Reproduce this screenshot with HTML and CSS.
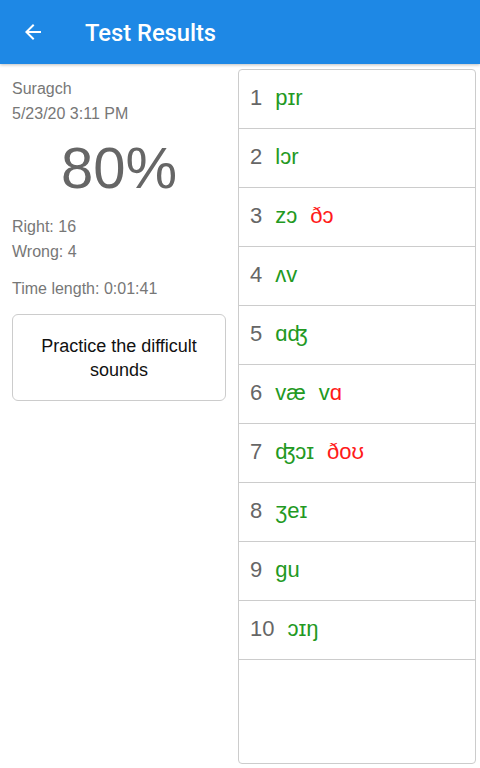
FILE: index.html
```html
<!DOCTYPE html>
<html>
<head>
<meta charset="utf-8">
<link rel="stylesheet" href="styles.css">
</head>
<body>
<header class="appbar">
  <svg class="back" viewBox="0 0 24 24" width="24" height="24"><path fill="#fff" d="M20 11H7.83l5.59-5.59L12 4l-8 8 8 8 1.41-1.41L7.83 13H20v-2z"/></svg>
  <h1 class="title">Test Results</h1>
</header>
<main class="content">
  <section class="summary">
    <div class="line">Suragch</div>
    <div class="line">5/23/20 3:11 PM</div>
    <div class="score">80%</div>
    <div class="line">Right: 16</div>
    <div class="line">Wrong: 4</div>
    <div class="line time">Time length: 0:01:41</div>
    <button class="practice">Practice the difficult sounds</button>
  </section>
  <section class="list">
    <div class="row"><span class="num">1</span><span class="ok">pɪr</span></div>
    <div class="row"><span class="num">2</span><span class="ok">lɔr</span></div>
    <div class="row"><span class="num">3</span><span class="ok">zɔ</span><span class="bad">ðɔ</span></div>
    <div class="row"><span class="num">4</span><span class="ok">ʌv</span></div>
    <div class="row"><span class="num">5</span><span class="ok">ɑʤ</span></div>
    <div class="row"><span class="num">6</span><span class="ok">væ</span><span class="word"><span class="ok">v</span><span class="bad">ɑ</span></span></div>
    <div class="row"><span class="num">7</span><span class="ok">ʤɔɪ</span><span class="bad">ðoʊ</span></div>
    <div class="row"><span class="num">8</span><span class="ok">ʒeɪ</span></div>
    <div class="row"><span class="num">9</span><span class="ok">gu</span></div>
    <div class="row"><span class="num">10</span><span class="ok">ɔɪŋ</span></div>
  </section>
</main>
</body>
</html>
```
FILE: styles.css
```css
* { box-sizing: border-box; }
html, body { margin: 0; padding: 0; height: 100%; }
body {
  font-family: "Liberation Sans", Arial, "DejaVu Sans", sans-serif;
  background: #fff;
  width: 480px;
  height: 768px;
  display: flex;
  flex-direction: column;
  overflow: hidden;
}
.appbar {
  height: 64px;
  flex: none;
  background: #1e88e5;
  display: flex;
  align-items: center;
  padding-left: 21px;
  box-shadow: 0 1px 3px rgba(0,0,0,0.25);
  position: relative;
  z-index: 1;
}
.back { display: block; }
.title {
  margin: 2px 0 0 40px;
  font-family: Roboto, "Noto Sans", sans-serif;
  color: #fff;
  font-size: 23.7px;
  font-weight: 500;
}
.content {
  flex: 1;
  display: flex;
  min-height: 0;
}
.summary {
  width: 238px;
  flex: none;
  padding: 12px 12px 0 12px;
  display: flex;
  flex-direction: column;
}
.line {
  font-size: 16px;
  line-height: 25px;
  color: #777;
}
.score {
  font-size: 58px;
  line-height: 66px;
  color: #666;
  text-align: center;
  margin: 9px 0 13px;
}
.time { margin-top: 12px; }
.practice {
  margin-top: 13px;
  height: 87px;
  width: 214px;
  background: #fff;
  border: 1px solid #ccc;
  border-radius: 6px;
  font-family: inherit;
  font-size: 18px;
  line-height: 24px;
  color: #111;
  padding: 0 16px;
}
.list {
  width: 238px;
  margin: 5px 4px 4px 0;
  border: 1px solid #ccc;
  border-radius: 4px;
  display: flex;
  flex-direction: column;
}
.row {
  height: 59px;
  flex: none;
  border-bottom: 1px solid #ccc;
  display: flex;
  align-items: center;
  padding-left: 11px;
  padding-bottom: 2px;
  font-size: 22px;
}
.num { color: #666; margin-right: 13px; }
.ok { color: #229922; }
.bad { color: #ff1a1a; }
.row > .num + span + span { margin-left: 13px; }
```
